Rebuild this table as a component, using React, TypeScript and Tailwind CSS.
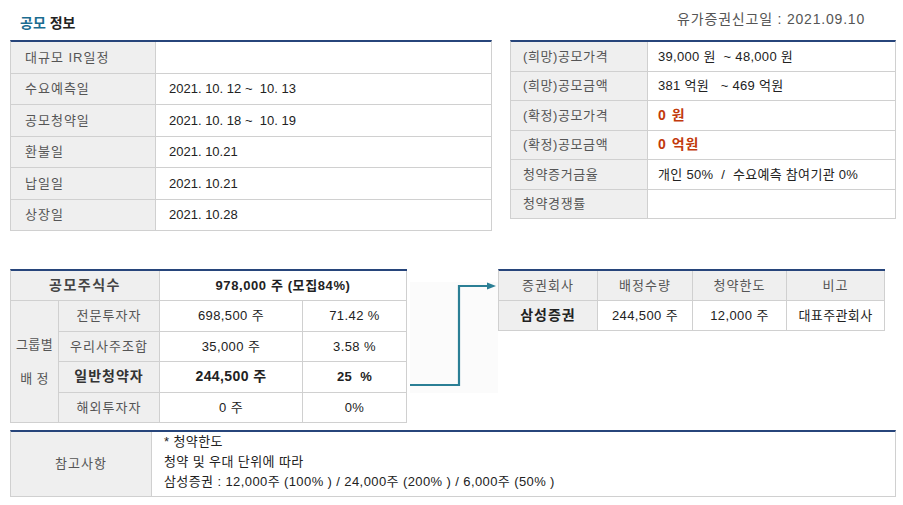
import React from 'react';

// 공모 정보 화면
const line = 'border-[#d0d0d0]';

const topRowsLeft: { label: string; value: string }[] = [
    { label: '대규모 IR일정', value: '' },
    { label: '수요예측일', value: '2021. 10. 12 ~  10. 13' },
    { label: '공모청약일', value: '2021. 10. 18 ~  10. 19' },
    { label: '환불일', value: '2021. 10.21' },
    { label: '납일일', value: '2021. 10.21' },
    { label: '상장일', value: '2021. 10.28' },
];

const topRowsRight: { label: string; value: string; red?: boolean }[] = [
    { label: '(희망)공모가격', value: '39,000 원  ~ 48,000 원' },
    { label: '(희망)공모금액', value: '381 억원   ~ 469 억원' },
    { label: '(확정)공모가격', value: '0 원', red: true },
    { label: '(확정)공모금액', value: '0 억원', red: true },
    { label: '청약증거금율', value: '개인 50%  /  수요예측 참여기관 0%' },
    { label: '청약경쟁률', value: '' },
];

const groupRows = [
    { name: '전문투자자', qty: '698,500 주', pct: '71.42 %' },
    { name: '우리사주조합', qty: '35,000 주', pct: '3.58 %' },
    { name: '일반청약자', qty: '244,500 주', pct: '25  %', bold: true },
    { name: '해외투자자', qty: '0 주', pct: '0%' },
];

function FlowArrow() {
    return (
        <svg width="91" height="154" viewBox="0 0 91 154" className="shrink-0">
            <rect x="3" y="13" width="88" height="111" fill="#fbfbfb" />
            <polyline points="3,116 52,116 52,17 82,17" fill="none" stroke="#2b7f95" strokeWidth="2.2" />
            <polygon points="80,13.5 89,17 80,20.5" fill="#2b7f95" />
        </svg>
    );
}

export default function App() {
    return (
        <div className="w-[903px] h-[505px] bg-white pl-[10px] pr-[7px] text-[13px] tracking-[0.4px] text-[#222] font-['Liberation_Sans','Noto_Sans_CJK_KR',sans-serif] whitespace-pre">
            {/* header */}
            <div className="flex justify-between items-start h-[40px]">
                <div className="pl-[10px] pt-[13px] leading-[20px] text-[14px] font-bold tracking-normal">
                    <span className="text-[#1b6c90]">공모</span> <span className="text-[#222]">정보</span>
                </div>
                <div className="pr-[31px] pt-[9px] leading-[20px] text-[14px] text-[#555] tracking-[0.8px]">유가증권신고일 : 2021.09.10</div>
            </div>

            {/* 일정 / 가격 */}
            <div className="flex items-start gap-[18px]">
                <div className={`w-[482px] border-t-2 border-t-[#27457b] border-x ${line}`}>
                    {topRowsLeft.map(r => (
                        <div key={r.label} className={`flex h-[31.5px] border-b ${line}`}>
                            <div className={`w-[145px] shrink-0 bg-[#efefef] border-r ${line} flex items-center pl-[14px] text-[#555] tracking-[1px]`}>{r.label}</div>
                            <div className="flex-1 flex items-center pl-[13px] tracking-normal">{r.value}</div>
                        </div>
                    ))}
                </div>
                <div className={`w-[386px] border-t-2 border-t-[#27457b] border-x ${line}`}>
                    {topRowsRight.map(r => (
                        <div key={r.label} className={`flex h-[29.5px] border-b ${line}`}>
                            <div className={`w-[137px] shrink-0 bg-[#efefef] border-r ${line} flex items-center pl-[12px] text-[#555] tracking-[0.6px]`}>{r.label}</div>
                            <div className={`flex-1 flex items-center pl-[10px] ${r.red ? 'text-[#c23a0c] font-bold text-[14px] tracking-[1px]' : 'tracking-[0.3px]'}`}>{r.value}</div>
                        </div>
                    ))}
                </div>
            </div>

            {/* 배정 */}
            <div className="flex items-start mt-[38px]">
                <div className={`w-[397px] grid grid-cols-[48px_101px_143px_104px] grid-rows-[repeat(5,30.4px)] border-t-2 border-t-[#27457b] border-l ${line} text-center`}>
                    <div className={`col-span-2 bg-[#efefef] border-r border-b ${line} flex items-center justify-center font-semibold text-[#444] text-[14px] tracking-[1.5px]`}>공모주식수</div>
                    <div className={`col-span-2 border-r border-b ${line} flex items-center justify-center font-bold tracking-[0.6px]`}>978,000 주 (모집84%)</div>
                    <div className={`row-span-4 bg-[#efefef] border-r border-b ${line} flex flex-col items-center justify-center leading-[34px] text-[#555]`}>
                        <span>그룹별</span>
                        <span>배 정</span>
                    </div>
                    {groupRows.map(g => (
                        <React.Fragment key={g.name}>
                            <div className={`bg-[#efefef] border-r border-b ${line} flex items-center justify-center tracking-[1px] ${g.bold ? 'font-bold text-[#333] text-[14px]' : 'text-[#555]'}`}>{g.name}</div>
                            <div className={`border-r border-b ${line} flex items-center justify-center ${g.bold ? 'font-bold text-[14px]' : ''}`}>{g.qty}</div>
                            <div className={`border-r border-b ${line} flex items-center justify-center ${g.bold ? 'font-bold' : ''}`}>{g.pct}</div>
                        </React.Fragment>
                    ))}
                </div>

                <FlowArrow />

                <div className={`w-[387px] grid grid-cols-[99px_95px_94px_98px] grid-rows-[30px_30px] border-t-2 border-t-[#27457b] border-l ${line} text-center`}>
                    {['증권회사', '배정수량', '청약한도', '비고'].map(h => (
                        <div key={h} className={`bg-[#efefef] border-r border-b ${line} flex items-center justify-center text-[#555] tracking-[1px]`}>{h}</div>
                    ))}
                    <div className={`bg-[#efefef] border-r border-b ${line} flex items-center justify-center font-bold text-[14px] tracking-[1px]`}>삼성증권</div>
                    <div className={`border-r border-b ${line} flex items-center justify-center`}>244,500 주</div>
                    <div className={`border-r border-b ${line} flex items-center justify-center`}>12,000 주</div>
                    <div className={`border-r border-b ${line} flex items-center justify-center`}>대표주관회사</div>
                </div>
            </div>

            {/* 참고사항 */}
            <div className={`mt-[7px] w-[886px] h-[67px] flex border-t-2 border-t-[#27457b] border-x border-b ${line}`}>
                <div className={`w-[141px] shrink-0 bg-[#efefef] border-r ${line} flex items-center justify-center text-[#555] tracking-[1px]`}>참고사항</div>
                <div className="flex flex-col pl-[12px] leading-[20px]">
                    <span>* 청약한도</span>
                    <span>청약 및 우대 단위에 따라</span>
                    <span>삼성증권 : 12,000주 (100% ) / 24,000주 (200% ) / 6,000주 (50% )</span>
                </div>
            </div>
        </div>
    );
}
